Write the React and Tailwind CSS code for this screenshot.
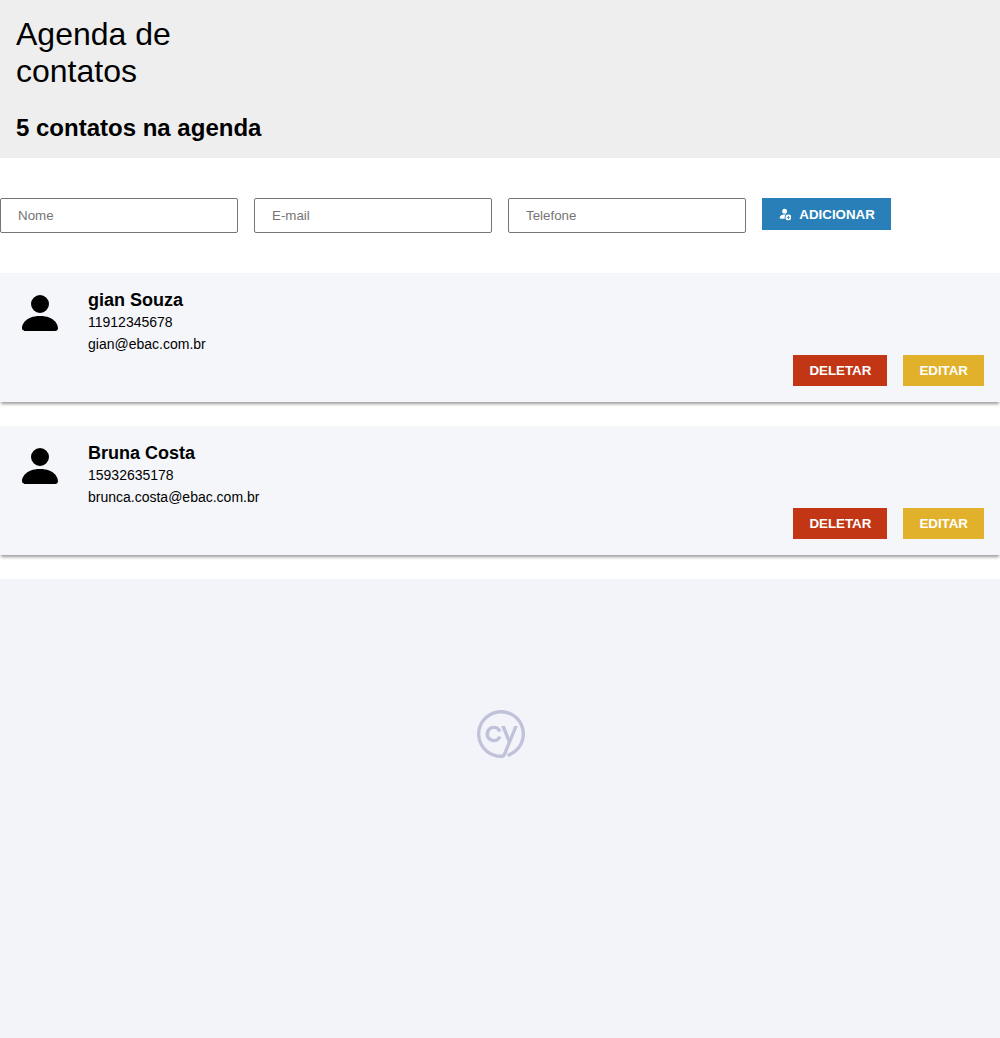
import { BsPersonFill, BsPersonFillAdd } from "react-icons/bs";
import { SiCypress } from "react-icons/si";

const contacts = [
  { name: "gian Souza", phone: "11912345678", email: "gian@ebac.com.br" },
  { name: "Bruna Costa", phone: "15932635178", email: "brunca.costa@ebac.com.br" },
];

function Field({ placeholder, type }) {
  return (
    <input
      type={type}
      placeholder={placeholder}
      className="h-[35px] w-[238px] rounded-[2px] border border-[#767676] bg-white px-[17px] text-[13.333px] placeholder:text-[#757575]"
    />
  );
}

function Contact({ name, phone, email }) {
  return (
    <li className="mb-6 flex h-[129px] bg-[#f4f6fa] p-4 shadow-[0_3px_3px_-1px_rgba(0,0,0,0.4)]">
      <BsPersonFill size={48} className="mr-6 shrink-0" />
      <div className="flex flex-1 flex-col">
        <p className="text-[18px] leading-[22px] font-bold">{name}</p>
        <p className="text-[14px] leading-[22px]">{phone}</p>
        <p className="text-[14px] leading-[22px]">{email}</p>
        <div className="flex gap-4 self-end">
          <button className="h-[31px] bg-[#c23616] px-4 text-[13.333px] leading-[15px] font-bold text-white">DELETAR</button>
          <button className="h-[31px] bg-[#e1b12c] px-4 text-[13.333px] leading-[15px] font-bold text-white">EDITAR</button>
        </div>
      </div>
    </li>
  );
}

export default function App() {
  return (
    <div className="flex h-screen flex-col overflow-hidden bg-white font-['Liberation_Sans',Arial,sans-serif] text-black">
      <header className="h-[158px] shrink-0 bg-[#eee] p-4">
        <h1 className="text-[32px] leading-[37px]">
          Agenda de
          <br />
          contatos
        </h1>
        <h2 className="mt-6 text-[24px] leading-[28px] font-bold">5 contatos na agenda</h2>
      </header>
      <form className="my-10 flex items-start gap-4">
        <Field type="text" placeholder="Nome" />
        <Field type="email" placeholder="E-mail" />
        <Field type="tel" placeholder="Telefone" />
        <button type="button" className="flex h-8 items-center gap-2 bg-[#2980b9] px-4 text-[13.333px] leading-[15px] font-bold text-white">
          <BsPersonFillAdd className="size-[13.333px]" />
          ADICIONAR
        </button>
      </form>
      <ul>
        {contacts.map((c) => (
          <Contact key={c.email} {...c} />
        ))}
      </ul>
      <div className="flex flex-1 justify-center bg-[#f3f4fa] pt-[131px] pl-[2px]">
        <SiCypress size={48} className="text-[#bfc2d8]" />
      </div>
    </div>
  );
}
